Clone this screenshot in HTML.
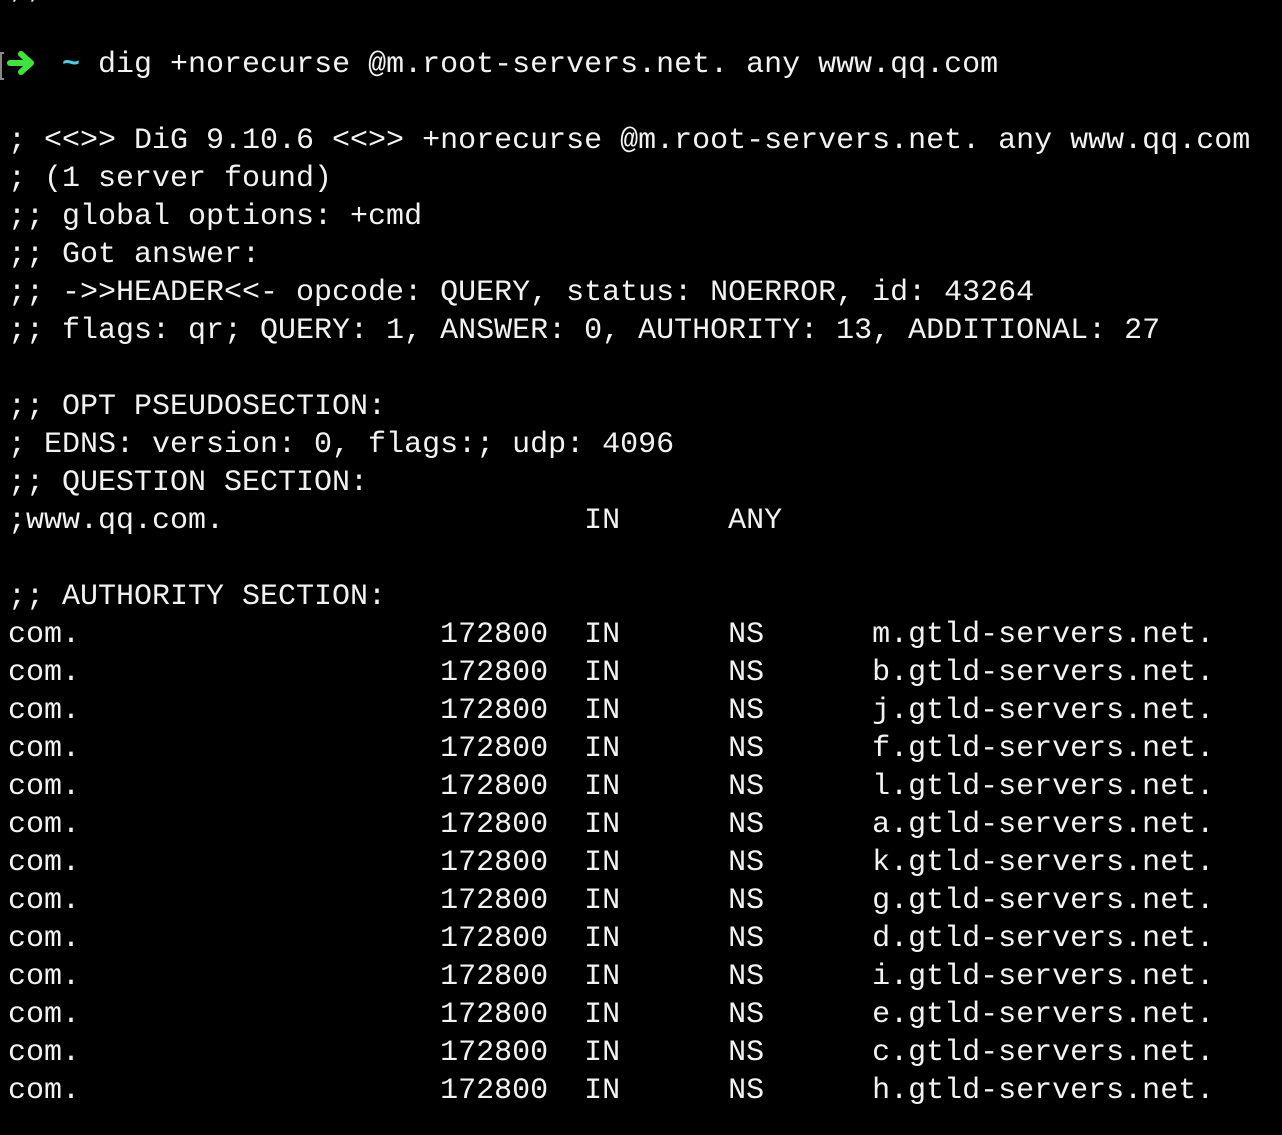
<!DOCTYPE html>
<html><head><meta charset="utf-8"><style>
html,body{margin:0;padding:0;background:#000;width:1282px;height:1135px;overflow:hidden}
pre{position:absolute;left:8px;top:46px;margin:0;font-family:"Liberation Mono","DejaVu Sans Mono",monospace;font-size:30px;line-height:38px;color:#f2f2f2;white-space:pre}
.c{color:#3fd6e6;font-weight:bold}
.top{top:-30px}
.br{position:absolute;left:0;top:52px;height:24px;border:2px solid #888;border-right:none;width:2px}
svg{position:absolute;left:7px;top:50px}
</style></head><body>
<pre class="top">;;</pre>
<svg width="30" height="26" viewBox="0 0 30 26"><path d="M3 13H22M14 4L24 13L14 22" stroke="#3ee43e" stroke-width="6" fill="none" stroke-linecap="round" stroke-linejoin="round"/></svg>
<pre>   <span class="c">~</span> dig +norecurse @m.root-servers.net. any www.qq.com

; &lt;&lt;&gt;&gt; DiG 9.10.6 &lt;&lt;&gt;&gt; +norecurse @m.root-servers.net. any www.qq.com
; (1 server found)
;; global options: +cmd
;; Got answer:
;; -&gt;&gt;HEADER&lt;&lt;- opcode: QUERY, status: NOERROR, id: 43264
;; flags: qr; QUERY: 1, ANSWER: 0, AUTHORITY: 13, ADDITIONAL: 27

;; OPT PSEUDOSECTION:
; EDNS: version: 0, flags:; udp: 4096
;; QUESTION SECTION:
;www.qq.com.                    IN      ANY

;; AUTHORITY SECTION:
com.                    172800  IN      NS      m.gtld-servers.net.
com.                    172800  IN      NS      b.gtld-servers.net.
com.                    172800  IN      NS      j.gtld-servers.net.
com.                    172800  IN      NS      f.gtld-servers.net.
com.                    172800  IN      NS      l.gtld-servers.net.
com.                    172800  IN      NS      a.gtld-servers.net.
com.                    172800  IN      NS      k.gtld-servers.net.
com.                    172800  IN      NS      g.gtld-servers.net.
com.                    172800  IN      NS      d.gtld-servers.net.
com.                    172800  IN      NS      i.gtld-servers.net.
com.                    172800  IN      NS      e.gtld-servers.net.
com.                    172800  IN      NS      c.gtld-servers.net.
com.                    172800  IN      NS      h.gtld-servers.net.</pre>
<div class="br"></div>
</body></html>
